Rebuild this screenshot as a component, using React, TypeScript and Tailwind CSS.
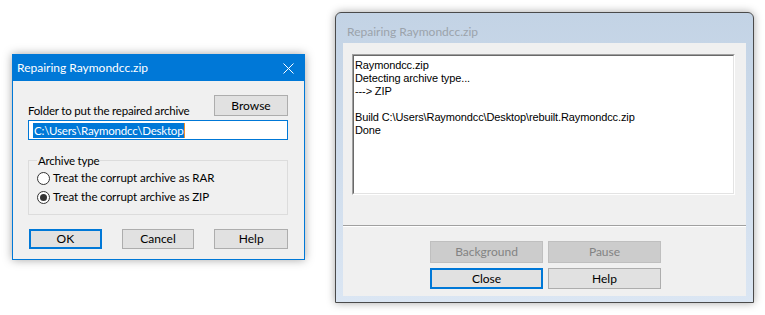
import React from "react";

const ui = { fontFamily: 'Lato, "Liberation Sans", Arial, sans-serif' };
const body = "text-[11.5px] tracking-[-0.2px] leading-none";
const mono = { fontFamily: '"Liberation Sans", Arial, sans-serif', letterSpacing: "-0.12px" };

function Btn({
  children,
  w,
  h = 20,
  focused = false,
  disabled = false,
}: {
  children: React.ReactNode;
  w: number;
  h?: number;
  focused?: boolean;
  disabled?: boolean;
}) {
  const cls = disabled
    ? "bg-[#cccccc] border border-[#bfbfbf] text-[#838383]"
    : focused
    ? "bg-[#e1e1e1] border-2 border-[#0078d7] text-black"
    : "bg-[#e1e1e1] border border-[#adadad] text-black";
  return (
    <div
      className={`flex items-center justify-center text-[12px] leading-none ${cls}`}
      style={{ width: w, height: h }}
    >
      {children}
    </div>
  );
}

function Radio({ checked, label }: { checked?: boolean; label: string }) {
  return (
    <div className="flex items-center gap-[3px] h-[19px]">
      <div className="w-[13px] h-[13px] rounded-full border border-[#333333] bg-white flex items-center justify-center">
        {checked && <div className="w-[7px] h-[7px] rounded-full bg-[#333333]" />}
      </div>
      <span className="text-[11.5px] tracking-[-0.05px] leading-none text-black">{label}</span>
    </div>
  );
}

function LeftDialog() {
  return (
    <div
      className="absolute left-[12px] top-[54px] w-[293px] h-[206px] border border-[#0078d7] bg-[#f0f0f0] flex flex-col shadow-[0_0_9px_rgba(0,0,0,0.35)]"
      style={ui}
    >
      <div className="h-[26px] bg-[#0078d7] flex items-center justify-between pl-[4px] pr-[10px]">
        <span className="text-white text-[12px] leading-none">Repairing Raymondcc.zip</span>
        <svg width="11" height="11" viewBox="0 0 11 11">
          <path d="M0.5 0.5 L10.5 10.5 M10.5 0.5 L0.5 10.5" stroke="white" strokeWidth="1" />
        </svg>
      </div>
      <div className="flex-1 flex flex-col pl-[15px] pr-[16px] pt-[14px]">
        <div className="flex items-end justify-between">
          <span className={`${body} text-black`}>Folder to put the repaired archive</span>
          <Btn w={74} h={21}>
            Browse
          </Btn>
        </div>
        <div className="mt-[4px] h-[20px] bg-white border border-[#0078d7] flex items-center pl-[4px]">
          <span className="bg-[#0078d7] text-white text-[11.5px] tracking-[-0.2px] leading-[15px] px-[1px]">
            C:\Users\Raymondcc\Desktop
          </span>
          <span className="w-[1px] h-[15px] bg-[#f08c28]" />
        </div>
        <fieldset className="mt-[15px] h-[60px] border border-[#dcdcdc] px-[8px] pt-[2px]">
          <legend className={`${body} text-black px-[1px]`}>Archive type</legend>
          <Radio label="Treat the corrupt archive as RAR" />
          <Radio checked label="Treat the corrupt archive as ZIP" />
        </fieldset>
        <div className="mt-[14px] flex gap-[20px] pl-[1px]">
          <Btn w={73} focused>
            OK
          </Btn>
          <Btn w={73}>Cancel</Btn>
          <Btn w={74}>Help</Btn>
        </div>
      </div>
    </div>
  );
}

function RightDialog() {
  const lines = [
    "Raymondcc.zip",
    "Detecting archive type...",
    "---> ZIP",
    "\u00a0",
    "Build C:\\Users\\Raymondcc\\Desktop\\rebuilt.Raymondcc.zip",
    "Done",
  ];
  return (
    <div
      className="absolute left-[335px] top-[12px] w-[419px] h-[291px] border border-[#4a4a4a] rounded-t-[6px] bg-gradient-to-b from-[#c3d3e5] to-[#dbe6f3] flex flex-col shadow-[0_0_9px_rgba(0,0,0,0.35)]"
      style={ui}
    >
      <div className="h-[30px] flex items-start pt-[13px] pl-[11px]">
        <span className="text-[12px] leading-none text-[#9ba3ab]">Repairing Raymondcc.zip</span>
      </div>
      <div className="mx-[7px] mb-[6px] flex-1 bg-[#f0f0f0] flex flex-col">
        <div className="ml-[9px] mt-[11px] w-[383px] h-[141px] border border-t-[#a0a0a0] border-l-[#a0a0a0] border-b-white border-r-white">
          <div className="w-full h-full border border-t-[#696969] border-l-[#696969] border-b-[#e3e3e3] border-r-[#e3e3e3] bg-white pl-[1px] pt-[3px]">
            {lines.map((l, i) => (
              <div key={i} className="text-[11px] leading-[13px] text-black whitespace-pre" style={mono}>
                {l}
              </div>
            ))}
          </div>
        </div>
        <div className="mt-[30px] h-[2px] border-t border-t-[#a0a0a0] border-b border-b-white" />
        <div className="mt-[14px] ml-[87px] flex flex-col gap-[5px]">
          <div className="flex gap-[5px]">
            <Btn w={113} h={22} disabled>
              Background
            </Btn>
            <Btn w={113} h={22} disabled>
              Pause
            </Btn>
          </div>
          <div className="flex gap-[5px]">
            <Btn w={113} h={21} focused>
              Close
            </Btn>
            <Btn w={113} h={21}>
              Help
            </Btn>
          </div>
        </div>
      </div>
    </div>
  );
}

export default function App() {
  return (
    <div className="relative w-[765px] h-[315px] bg-white overflow-hidden">
      <LeftDialog />
      <RightDialog />
    </div>
  );
}
